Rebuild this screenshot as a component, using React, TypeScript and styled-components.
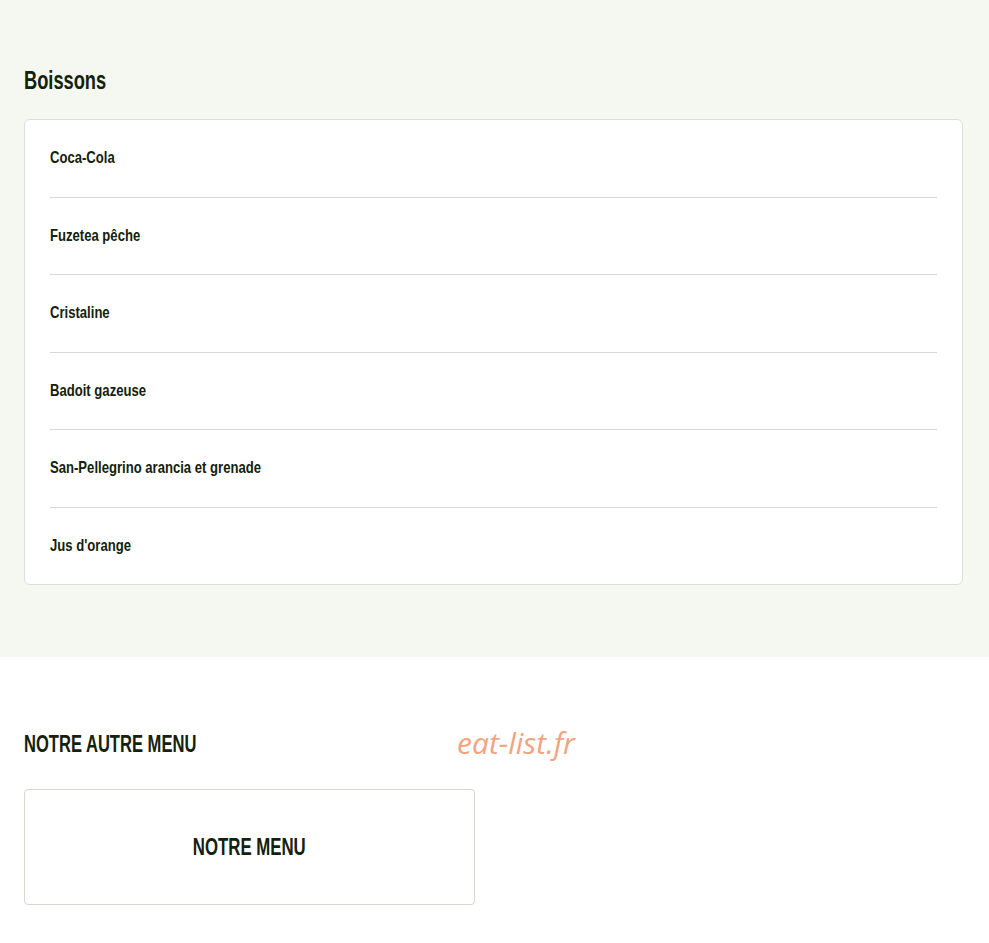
import styled, { createGlobalStyle } from 'styled-components';

const GlobalStyle = createGlobalStyle`
  body {
    margin: 0;
    background: #ffffff;
    font-family: "Liberation Sans", Arial, sans-serif;
    color: #13210d;
  }
`;

const drinks = [
  'Coca-Cola',
  'Fuzetea pêche',
  'Cristaline',
  'Badoit gazeuse',
  'San-Pellegrino arancia et grenade',
  "Jus d'orange",
];

const App = () => {
  return (
    <>
      <GlobalStyle />
      <MenuSection>
        <SectionTitle>
          <Narrow>Boissons</Narrow>
        </SectionTitle>
        <ItemList>
          {drinks.map((name) => (
            <Item key={name}>
              <Narrow $scale={0.77}>{name}</Narrow>
            </Item>
          ))}
        </ItemList>
      </MenuSection>
      <OtherMenus>
        <OtherTitle>
          <Narrow $scale={0.72}>NOTRE AUTRE MENU</Narrow>
        </OtherTitle>
        <Watermark>eat-list.fr</Watermark>
        <MenuLink href="#">
          <Narrow $center>NOTRE MENU</Narrow>
        </MenuLink>
      </OtherMenus>
    </>
  );
};

export default App;

// condensed headline look: squeeze the bold sans horizontally
const Narrow = styled.span<{ $center?: boolean; $scale?: number }>`
  display: inline-block;
  white-space: nowrap;
  transform: scaleX(${({ $scale }) => $scale ?? 0.73});
  transform-origin: ${({ $center }) => ($center ? 'center' : 'left')} center;
`;

const MenuSection = styled.section`
  background-color: #f4f8f1;
  padding: 68px 26px 72px 24px;
`;

const SectionTitle = styled.h2`
  margin: 0 0 26px 0;
  font-size: 25px;
  line-height: 25px;
  font-weight: 700;
`;

const ItemList = styled.ul`
  list-style: none;
  margin: 0;
  padding: 0 25px;
  background: #ffffff;
  border: 1px solid #dcdfd8;
  border-radius: 6px;
`;

const Item = styled.li`
  display: flex;
  align-items: center;
  height: 76.5px;
  font-size: 17px;
  font-weight: 700;
  border-bottom: 1px solid #d6d8d3;

  &:last-child {
    border-bottom: none;
  }
`;

const OtherMenus = styled.section`
  position: relative;
  padding: 76px 24px 38px 24px;
`;

const OtherTitle = styled.h3`
  margin: 0 0 34px 0;
  font-size: 23px;
  line-height: 22px;
  font-weight: 700;
`;

const Watermark = styled.span`
  position: absolute;
  left: 457px;
  top: 65px;
  font-family: "Open Sans", sans-serif;
  font-style: italic;
  font-size: 30px;
  color: #f2a47f;
  pointer-events: none;
`;

const MenuLink = styled.a`
  display: flex;
  align-items: center;
  justify-content: center;
  width: 451px;
  height: 116px;
  box-sizing: border-box;
  border: 1px solid #d6d8d0;
  border-radius: 4px;
  text-decoration: none;
  color: inherit;
  font-size: 23px;
  font-weight: 700;
`;
